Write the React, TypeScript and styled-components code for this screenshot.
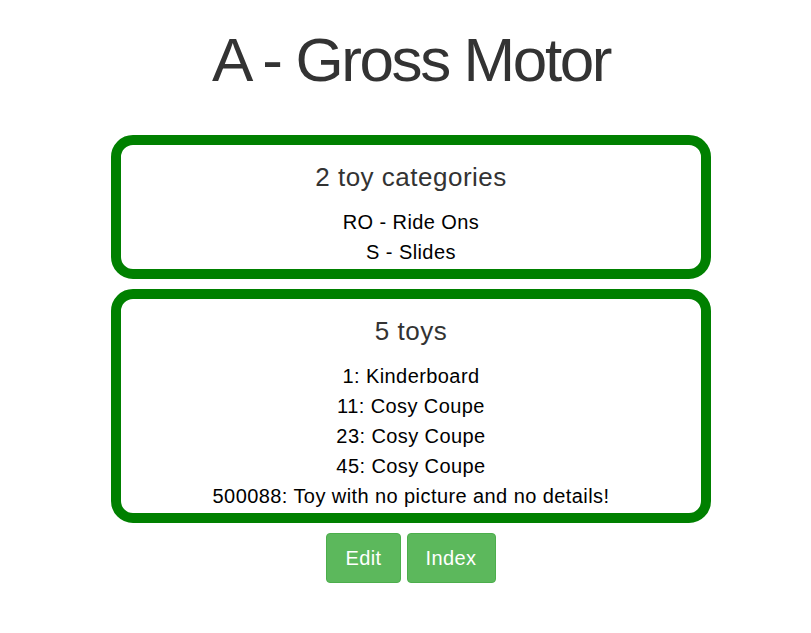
import React from 'react';
import styled, { createGlobalStyle } from 'styled-components';

const GlobalStyle = createGlobalStyle`
  html, body {
    margin: 0;
    padding: 0;
    background: #ffffff;
  }
  body {
    font-family: "Liberation Sans", Arial, Helvetica, sans-serif;
    color: #333333;
  }
`;

const categories = ['RO - Ride Ons', 'S - Slides'];

const toys = [
  '1: Kinderboard',
  '11: Cosy Coupe',
  '23: Cosy Coupe',
  '45: Cosy Coupe',
  '500088: Toy with no picture and no details!',
];

function App() {
  return (
    <>
      <GlobalStyle />
      <Page>
        <Title>A - Gross Motor</Title>
        <Panel>
          <PanelHeading>{categories.length} toy categories</PanelHeading>
          <List>
            {categories.map((c) => (
              <Item key={c}>{c}</Item>
            ))}
          </List>
        </Panel>
        <Panel>
          <PanelHeading>{toys.length} toys</PanelHeading>
          <List>
            {toys.map((t) => (
              <Item key={t}>{t}</Item>
            ))}
          </List>
        </Panel>
        <Actions>
          <Button type="button">Edit</Button>
          <Button type="button">Index</Button>
        </Actions>
      </Page>
    </>
  );
}

const Page = styled.div`
  display: flex;
  flex-direction: column;
  align-items: center;
  padding: 26px 0 0 11px;
`;

const Title = styled.h1`
  margin: 0 0 41px;
  font-size: 62px;
  font-weight: 400;
  line-height: 68px;
  letter-spacing: -2.4px;
  color: #333333;
`;

const Panel = styled.section`
  box-sizing: border-box;
  width: 600px;
  margin-bottom: 10px;
  padding: 17px 0 2px;
  border: 10px solid #008000;
  border-radius: 22px;
  text-align: center;
`;

const PanelHeading = styled.h3`
  margin: 0 0 15px;
  font-size: 26px;
  font-weight: 400;
  line-height: 30px;
  letter-spacing: 0.5px;
  color: #333333;
`;

const List = styled.ul`
  margin: 0;
  padding: 0;
  list-style: none;
`;

const Item = styled.li`
  font-size: 20px;
  line-height: 30px;
  letter-spacing: 0.42px;
  color: #000000;
`;

const Actions = styled.div`
  display: flex;
  gap: 6px;
`;

const Button = styled.button`
  height: 50px;
  padding: 0 18px;
  border: 1px solid #4cae4c;
  border-radius: 4px;
  background: #5cb85c;
  color: #ffffff;
  font-family: "Liberation Sans", Arial, sans-serif;
  font-size: 20px;
  letter-spacing: 0.4px;
  cursor: pointer;
`;

export default App;
